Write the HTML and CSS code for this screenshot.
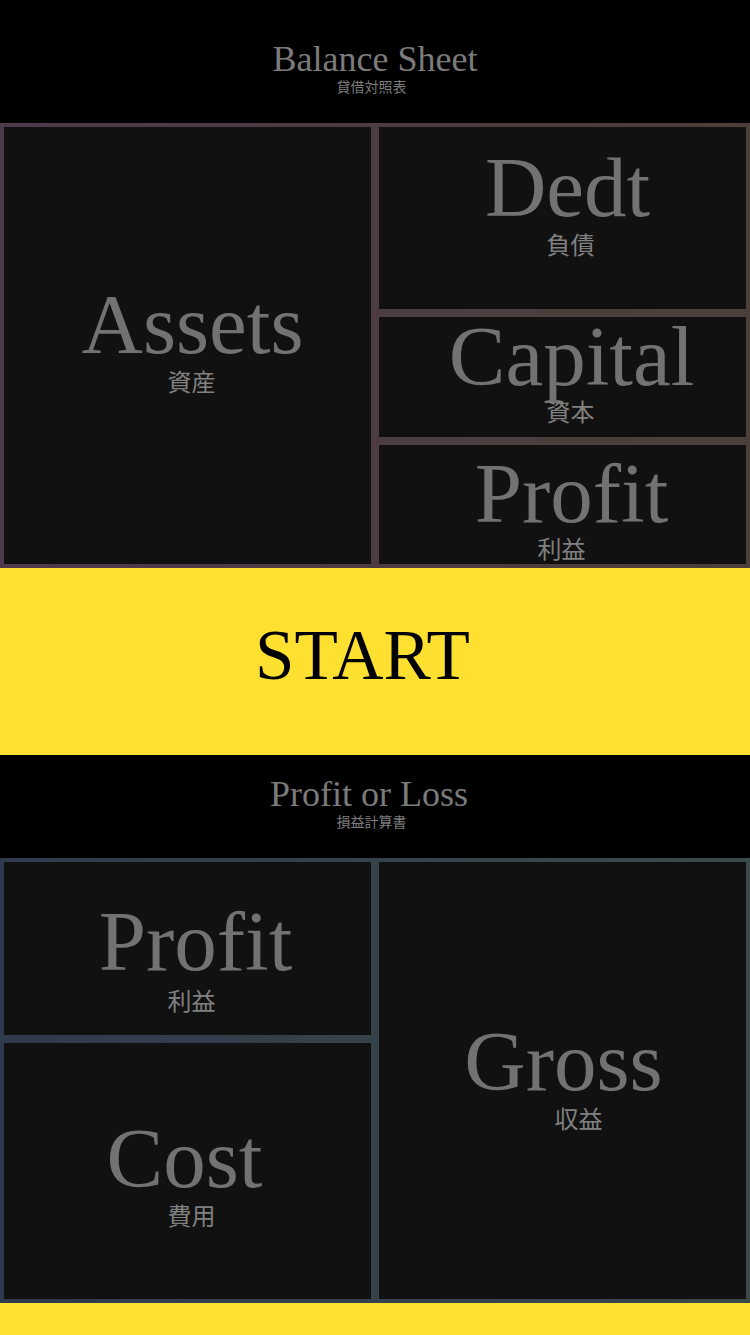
FILE: index.html
```html
<!DOCTYPE html>
<html lang="ja">
<head>
<meta charset="utf-8">
<title>Balance Sheet</title>
<link rel="stylesheet" href="styles.css">
</head>
<body>
<div class="page">
  <header class="sheet-head sheet-head--bs">
    <div class="sheet-title">Balance Sheet</div>
    <div class="sheet-sub">貸借対照表</div>
  </header>

  <section class="board board--bs">
    <div class="tile tile--assets">
      <div class="tile-word">Assets</div>
      <div class="tile-label">資産</div>
    </div>
    <div class="stack">
      <div class="tile tile--debt">
        <div class="tile-word">Dedt</div>
        <div class="tile-label">負債</div>
      </div>
      <div class="tile tile--capital">
        <div class="tile-word">Capital</div>
        <div class="tile-label">資本</div>
      </div>
      <div class="tile tile--profit">
        <div class="tile-word">Profit</div>
        <div class="tile-label">利益</div>
      </div>
    </div>
  </section>

  <div class="start-bar">
    <span class="start-text">START</span>
  </div>

  <header class="sheet-head sheet-head--pl">
    <div class="sheet-title">Profit or Loss</div>
    <div class="sheet-sub">損益計算書</div>
  </header>

  <section class="board board--pl">
    <div class="stack stack--pl">
      <div class="tile tile--plprofit">
        <div class="tile-word">Profit</div>
        <div class="tile-label">利益</div>
      </div>
      <div class="tile tile--cost">
        <div class="tile-word">Cost</div>
        <div class="tile-label">費用</div>
      </div>
    </div>
    <div class="tile tile--gross">
      <div class="tile-word">Gross</div>
      <div class="tile-label">収益</div>
    </div>
  </section>

  <div class="end-bar"></div>
</div>
</body>
</html>
```

FILE: styles.css
```css
html, body {
  margin: 0;
  padding: 0;
  background: #000;
}

.page {
  width: 750px;
  height: 1335px;
  overflow: hidden;
  display: flex;
  flex-direction: column;
  background: #000;
}

.sheet-head {
  display: flex;
  flex-direction: column;
  align-items: center;
  box-sizing: border-box;
}

.sheet-head--bs {
  height: 123px;
  padding-top: 41px;
}

.sheet-head--pl {
  height: 103px;
  padding-top: 21px;
}

.sheet-title {
  font-family: "Liberation Serif", "Times New Roman", serif;
  font-size: 36px;
  line-height: 36px;
  color: #7b7b7b;
}

.sheet-head--pl .sheet-title {
  margin-right: 12px;
}

.sheet-sub {
  margin-top: 2px;
  margin-right: 7px;
  font-family: "Noto Sans CJK JP", "Noto Sans", sans-serif;
  font-size: 14px;
  line-height: 14px;
  color: #7d7d7d;
}

.board {
  height: 445px;
  box-sizing: border-box;
  padding: 4px;
  display: grid;
  grid-template-columns: 1fr 1fr;
  gap: 8px;
}

.board--bs {
  background: linear-gradient(to right, #4d3a4b, #4c3e38);
}

.board--pl {
  background: linear-gradient(to right, #2f3b4d, #3a4a49);
}

.stack {
  display: grid;
  grid-template-rows: 182fr 120fr 119fr;
  gap: 8px;
}

.stack--pl {
  grid-template-rows: 173fr 256fr;
}

/* --wx / --lx: horizontal shift of word / label, --dy: vertical shift of the group, --gap: word-label gap */
.tile {
  --wx: 0px;
  --lx: 0px;
  --dy: 0px;
  --gap: 5px;
  background: #111111;
  display: flex;
  flex-direction: column;
  align-items: center;
  justify-content: center;
  overflow: hidden;
}

.tile-word {
  margin-top: calc(var(--dy) * 2);
  margin-left: calc(var(--wx) * 2);
  font-family: "Liberation Serif", "Times New Roman", serif;
  font-size: 85px;
  line-height: 84px;
  color: #727272;
}

.tile-label {
  margin-top: var(--gap);
  margin-left: calc(var(--lx) * 2);
  font-family: "Noto Sans CJK JP", "Noto Sans", sans-serif;
  font-size: 24px;
  line-height: 24px;
  color: #808080;
}

.tile--assets   { --wx: 5px;  --lx: 4px;  --dy: -8px; --gap: 3px; }
.tile--debt     { --wx: 5px;  --lx: 8px;  --dy: -18px; --gap: 3px; }
.tile--capital  { --wx: 9px;  --lx: 8px;  --dy: -9px; --gap: 1px; }
.tile--profit   { --wx: 9px;  --lx: -1px; --dy: 1px;  --gap: 1px; }
.tile--plprofit { --wx: 8px;  --lx: 4px;  --dy: 7px; }
.tile--cost     { --wx: -3px; --lx: 4px;  --dy: 0px;  --gap: 3px; }
.tile--gross    { --wx: 1px;  --lx: 16px; --dy: -6px; --gap: 3px; }

.start-bar {
  height: 187px;
  background: #fde030;
  display: flex;
  align-items: center;
  justify-content: center;
}

.start-text {
  margin-right: 25px;
  margin-bottom: 12px;
  font-family: "Liberation Serif", "Times New Roman", serif;
  font-size: 71px;
  line-height: 71px;
  color: #000;
}

.end-bar {
  flex: 1;
  background: #fde030;
}
```
